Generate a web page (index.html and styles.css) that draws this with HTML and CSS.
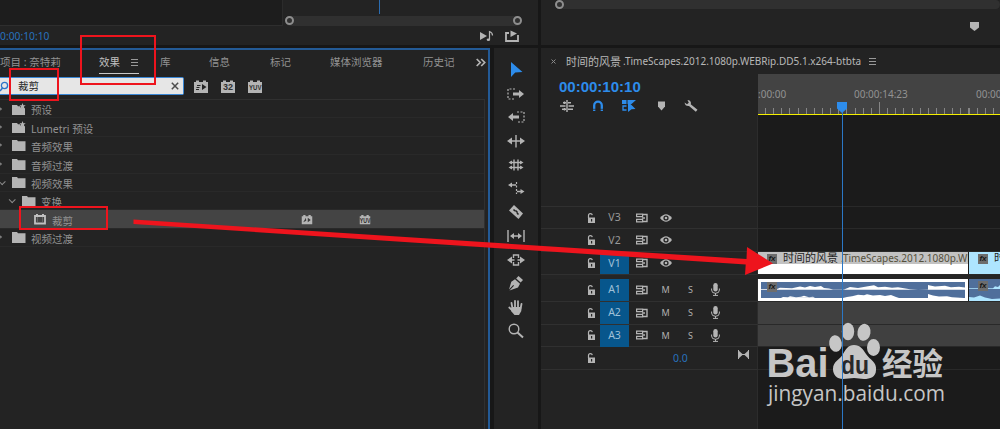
FILE: index.html
```html
<!DOCTYPE html>
<html lang="zh-CN">
<head>
  <meta charset="UTF-8">
  <title>时间的风景</title>
  <meta name="viewport" content="width=device-width, initial-scale=1.0">
  <link rel="stylesheet" href="styles.css">
</head>
<body>
  <!-- 图标定义 -->
  <svg class="defs" width="0" height="0">
    <symbol id="folder" viewBox="0 0 14 12"><path d="M0 1h5l1 1.3h7.5V12H0z"/></symbol>
    <symbol id="preset" viewBox="0 0 14 12"><path d="M0 2h5l1 1.3h2l1 2 2-1 2 1.2V12H0z"/><path d="M10.5 0l.9 2.2 2.3.1-1.8 1.5.7 2.3-2.1-1.3-2 1.3.6-2.3L7.4 2.3l2.3-.1z"/></symbol>
    <symbol id="brick" viewBox="0 0 16 13"><path d="M1 2h2V.5h3V2h4V.5h3V2h2v11H1z"/></symbol>
    <symbol id="lock" viewBox="0 0 9 10"><path d="M1.500 5V2.500Q1.500.700 3.300.700t2 1.500" fill="none" stroke="#b4b4b4" stroke-width="1.200"/><path d="M1 4.500h7V10H1z"/><path d="M4 6h1.200v2.500H4z" fill="#232323"/></symbol>
    <symbol id="sync" viewBox="0 0 12 10"><path d="M.600 1.100h6v2.600h-6zM.600 6.300h6v2.600h-6z" fill="none" stroke="#b4b4b4" stroke-width="1.200"/><path d="M7 1.500h4v7H7M6 5h3" fill="none" stroke="#b4b4b4" stroke-width="1.400"/></symbol>
    <symbol id="eye" viewBox="0 0 12 8"><path d="M0 4Q6-3.5 12 4 6 11.500 0 4z"/><circle cx="6" cy="4" r="2.6" fill="#232323"/><circle cx="6" cy="4" r="1.3"/></symbol>
    <symbol id="mic" viewBox="0 0 9 13"><rect x="2.3" width="4.400" height="8.500" rx="2.200"/><path d="M.6 5.500v1.500q0 3.300 3.900 3.300t3.900-3.300V5.500M4.500 10v2.400M2 12.400h5" fill="none" stroke="#b4b4b4"/></symbol>
    <symbol id="marker" viewBox="0 0 9 9"><path d="M0 0h9v5.500L4.500 9 0 5.500z"/></symbol>
  </svg>

  <div class="app">
    <!-- 上方监视器 -->
    <div class="monitor source">
      <div class="source-top">
        <div class="source-view"></div>
        <div class="source-bar">
          <i class="source-head"></i>
          <div class="zoombar"><i class="knob"></i><i class="knob"></i></div>
        </div>
      </div>
      <div class="source-foot">
        <span class="small-time">0:00:10:10</span>
        <svg class="play-audio" width="14" height="12" viewBox="0 0 14 12"><path d="M0 2l7 4-7 4z"/><path d="M9.500 9.500V1.500q3 1 3 4" fill="none" stroke="#b4b4b4" stroke-width="1.200"/><ellipse cx="8.400" cy="9.700" rx="1.700" ry="1.300"/></svg>
        <svg width="14" height="12" viewBox="0 0 14 12"><path d="M4 3H1v8h12V5" fill="none" stroke="#b4b4b4" stroke-width="1.800"/><path d="M5.500.500L12 3.500 5.500 7z"/></svg>
      </div>
    </div>
    <div class="monitor program">
      <div class="zoombar"><i class="knob"></i></div>
      <svg class="program-marker" width="9" height="9"><use href="#marker"/></svg>
    </div>

    <!-- 效果面板 -->
    <div class="effects">
      <div class="tabs">
        <span>项目 : 奈特莉</span>
        <span class="active">效果<i class="menu"></i></span>
        <span>库</span>
        <span>信息</span>
        <span>标记</span>
        <span>媒体浏览器</span>
        <span class="cut">历史记</span>
        <svg class="more" width="10" height="9" viewBox="0 0 10 9"><path d="M.700 1l3.500 3.500L.700 8M5.200 1l3.500 3.500L5.200 8" fill="none" stroke="#b4b4b4" stroke-width="1.700"/></svg>
      </div>
      <div class="search-row">
        <div class="search">
          <svg width="9" height="11" viewBox="0 0 9 11"><circle cx="4.500" cy="4.500" r="3.100" fill="none" stroke="#2d75c8" stroke-width="1.300"/><path d="M2.500 7L0 10" stroke="#2d75c8" stroke-width="1.500"/></svg>
          <span>裁剪</span>
          <svg class="clear" width="8" height="8" viewBox="0 0 8 8"><path d="M.800.800l6.400 6.400M7.200.800L.800 7.200" stroke="#4c4c4c" stroke-width="1.500"/></svg>
        </div>
        <span class="badge"><svg width="16" height="13" viewBox="0 0 16 13"><use href="#brick"/><path d="M9 4l4.500 3L9 10zM4 5h3.500v1H4zM3.500 7h3v1h-3zM3 9h3v1H3z" fill="#242424"/></svg></span>
        <span class="badge"><svg width="16" height="13"><use href="#brick"/></svg><b>32</b></span>
        <span class="badge"><svg width="16" height="13"><use href="#brick"/></svg><b class="yuv">YUV</b></span>
      </div>
      <div class="tree">
        <div class="row"><i class="shut"></i><svg><use href="#preset"/></svg><span>预设</span></div>
        <div class="row"><i class="shut"></i><svg><use href="#preset"/></svg><span>Lumetri 预设</span></div>
        <div class="row"><i class="shut"></i><svg><use href="#folder"/></svg><span>音频效果</span></div>
        <div class="row"><i class="shut"></i><svg><use href="#folder"/></svg><span>音频过渡</span></div>
        <div class="row"><i class="open"></i><svg><use href="#folder"/></svg><span>视频效果</span></div>
        <div class="row level-1"><i class="open"></i><svg><use href="#folder"/></svg><span>变换</span></div>
        <div class="row level-2">
          <svg viewBox="0 0 14 12"><path d="M2 3h10v7.500H2zM3 1.800h2M9 1.800h2" fill="none" stroke="#c0c0c0" stroke-width="1.800"/><path d="M4.500 4v5.500M9.500 4v5.500" stroke="#777" stroke-width=".700"/></svg>
          <span>裁剪</span>
          <div class="row-badges">
            <span class="badge"><svg viewBox="0 0 16 13"><use href="#brick"/><path d="M9 4l4 3-4 3zM6.500 4L3 10l4-2z" fill="#3c3c3c"/></svg></span>
            <span class="badge"><svg viewBox="0 0 16 13"><use href="#brick"/></svg><b class="yuv">YUV</b></span>
          </div>
        </div>
        <div class="row"><i class="shut"></i><svg><use href="#folder"/></svg><span>视频过渡</span></div>
      </div>
    </div>

    <!-- 工具栏 -->
    <div class="tools">
      <svg viewBox="0 0 18 18"><path d="M4 1v15l4.200-4.500 7.300-.500z" fill="#2d8ceb"/></svg>
      <svg viewBox="0 0 18 18"><path d="M8 4H1v10h7" class="dash"/><path d="M6 7.500h6V5l5 4-5 4v-2.500H6z"/></svg>
      <svg viewBox="0 0 18 18"><path d="M10 4h7v10h-7" class="dash"/><path d="M12 7.500H6V5L1 9l5 4v-2.500h6z"/></svg>
      <svg viewBox="0 0 18 18"><path d="M9 3v12.500M4 9h10" class="line"/><path d="M0 9l5-3.500v7zM18 9l-5-3.500v7z"/></svg>
      <svg viewBox="0 0 18 18"><path d="M7 3.500v11M11 3.500v11M3 6.500h12M3 11.500h12" class="line"/><path d="M1.500 6.500L5 4.500v4zM16.500 6.500L13 4.500v4zM1.500 11.500L5 9.500v4zM16.500 11.500L13 9.500v4z"/></svg>
      <svg viewBox="0 0 18 18"><path d="M9.500 3v12" class="dash"/><path d="M4 6h5M10 12.500h5" class="line"/><path d="M1 6l4-2.500v5zM17.500 12.500l-4-2.500v5z"/></svg>
      <svg viewBox="0 0 18 18"><path d="M7 2L16 10.500 11.500 16 2 7.500z"/><path d="M6.500 6.500L8 8M10 10l1.500 1.500M8.500 7.500l2 2" stroke="#232323" stroke-width="1.600"/></svg>
      <svg viewBox="0 0 18 18"><path d="M1 3v12M17 3v12M5 9h8" class="line"/><path d="M3 9l4-3v6zM15 9l-4-3v6z"/></svg>
      <svg viewBox="0 0 18 18"><path d="M6.500 7V4h5v3M6.500 11v3h5v-3M4 9h3.500M10.500 9H14" class="line"/><path d="M0 9l5-3.500v7zM18 9l-5-3.500v7z"/></svg>
      <svg viewBox="0 0 18 18"><path d="M11.500 2l4.500 4-2.300 2.500-4.500-4z"/><path d="M8 5.300l5 4.500-2 3.700-8.500 3L7 11.800 6.200 11 2 15.500l2.300-7.700z"/></svg>
      <svg viewBox="0 0 18 18"><path d="M5.500 10.500L4.500 5M8 9.500V2.800M11 9.500V3.200M13.500 11l1-5M2.300 9.500L6 13" fill="none" stroke="#b4b4b4" stroke-width="1.800" stroke-linecap="round"/><path d="M4.700 9h9.600v4l-2.300 4H7.500L4 13z"/></svg>
      <svg viewBox="0 0 18 18"><circle cx="7" cy="7" r="4.800" class="line"/><path d="M10.500 10.500l5.500 5" stroke="#b4b4b4" stroke-width="2"/></svg>
    </div>

    <!-- 时间轴 -->
    <div class="timeline">
      <div class="seq-tab"><svg width="5" height="5" viewBox="0 0 5 5"><path d="M.500.500l4 4M4.500.500l-4 4" stroke="#8a8a8a"/></svg><span class="seq-cn">时间的风景</span><span class="seq-name">.TimeScapes.2012.1080p.WEBRip.DD5.1.x264-btbta</span><i class="menu"></i></div>
      <div class="seq-head">
        <div class="seq-left">
          <div class="timecode">00:00:10:10</div>
          <div class="seq-tools">
            <svg viewBox="0 0 14 12"><path d="M7 0v12M3 2.800h3M8 2.800h3M0 6h5.500M8.500 6H14M2 9.300h4M8 9.300h5M4.500 1.500v2.500M4.500 8v2.500" fill="none" stroke="#b4b4b4" stroke-width="1.400"/></svg>
            <svg viewBox="0 0 14 12"><path d="M3.200 11V5.500a3.800 3.800 0 0 1 7.600 0V11" fill="none" stroke="#2d8ceb" stroke-width="2.300"/><path d="M1.500 9.300h11" stroke="#232323" stroke-width=".700"/></svg>
            <svg viewBox="0 0 14 12"><path d="M0 0h4.500v4H0zM5.500 0H14L9.500 4h-4z" fill="#2d8ceb"/><path d="M4.500 6H1v4h3.500" fill="none" stroke="#2d8ceb" stroke-width="1.300"/><path d="M6 1.500l7.500 7.500-4 .200L6 12z" fill="#2d8ceb"/></svg>
            <svg viewBox="-5 -1.500 14 12"><path d="M0 0h7v5L3.500 9 0 5z"/></svg>
            <svg viewBox="0 0 14 12"><path d="M3.500 0Q6.500 0 7 3L6.700 4.300l6.800 5.500-1.700 2L5 6Q1 6.300.600 2.500L3 4.200 4.800 2.700z"/></svg>
          </div>
        </div>
        <div class="ruler">
          <div class="ruler-labels"><span>:00:00</span><span>00:00:14:23</span><span>00:00:29:23</span></div>
          <div class="ticks"><i class="major"></i></div>
        </div>
      </div>
      <div class="tracks">
        <div class="track spacer"><div class="head"></div><div class="lane"></div></div>
        <div class="track"><div class="head"><svg class="i-lock"><use href="#lock"/></svg><b>V3</b><svg class="i-sync"><use href="#sync"/></svg><svg class="i-eye"><use href="#eye"/></svg></div><div class="lane"></div></div>
        <div class="track"><div class="head"><svg class="i-lock"><use href="#lock"/></svg><b>V2</b><svg class="i-sync"><use href="#sync"/></svg><svg class="i-eye"><use href="#eye"/></svg></div><div class="lane"></div></div>
        <div class="track">
          <div class="head"><svg class="i-lock"><use href="#lock"/></svg><b class="on">V1</b><svg class="i-sync"><use href="#sync"/></svg><svg class="i-eye"><use href="#eye"/></svg></div>
          <div class="lane">
            <div class="clip video"><em>fx</em><span class="clip-cn">时间的风景</span><span class="clip-name">.TimeScapes.2012.1080p.WEBRip</span></div>
            <div class="clip video next"><em>fx</em><span class="clip-cn">时间的风景</span></div>
          </div>
        </div>
        <div class="divider"></div>
        <div class="track">
          <div class="head"><svg class="i-lock"><use href="#lock"/></svg><b class="on">A1</b><svg class="i-sync"><use href="#sync"/></svg><u>M</u><u>S</u><svg class="i-mic"><use href="#mic"/></svg></div>
          <div class="lane">
            <div class="clip audio"><em>fx</em>
              <svg width="204" height="16" viewBox="0 0 204 16"><path fill="#fff" d="M0 7H16l3-1.300 12 .500 8-1.700 5 1 5-1.500 5 1 6-1 3 2 5 .500 4 1H83l6-2.500 8 1 10-1.700 6-1 4 2 7-.500 7 1 6-.600 12 2 8 .500 10 .300V3l2 .500 5 1 10-.700 6 1.400 8-.400 8 1 5-.300V7.800H0zM20 16l2-1 5 .3 2-1 6 1 5-.500 3-1 5 1.500 4-.500 2 1zM82 16l4-1 5-.800 6-1.500 6 .500 3-1 6 1.300 7-.500 5 1 6-1 5 2 3 1zM167 16v-4l5 1.500 6 1 8-.300 5 1 12 .800z"/></svg>
            </div>
            <div class="clip audio next"><em>fx</em>
              <svg width="31" height="22" viewBox="0 0 31 22"><path fill="#aee5ff" d="M0 9.200h24l2-2 3 .800 2-2V10H0zM0 18l5 .500 6-2 5 2 7 1.500 8-.500V22H0z"/></svg>
            </div>
          </div>
        </div>
        <div class="track"><div class="head"><svg class="i-lock"><use href="#lock"/></svg><b class="on">A2</b><svg class="i-sync"><use href="#sync"/></svg><u>M</u><u>S</u><svg class="i-mic"><use href="#mic"/></svg></div><div class="lane grey"></div></div>
        <div class="track"><div class="head"><svg class="i-lock"><use href="#lock"/></svg><b class="on">A3</b><svg class="i-sync"><use href="#sync"/></svg><u>M</u><u>S</u><svg class="i-mic"><use href="#mic"/></svg></div><div class="lane grey"></div></div>
        <div class="track"><div class="head"><svg class="i-lock"><use href="#lock"/></svg><span class="level">0.0</span><svg class="i-master" viewBox="0 0 11 9"><path d="M0 0l5 4.500L0 9zM11 0L6 4.500 11 9z"/><path d="M3 4.500h5M.500 0v9M10.500 0v9" stroke="#b4b4b4"/></svg></div><div class="lane"></div></div>
        <div class="track rest"><div class="head"></div><div class="lane"></div></div>
      </div>
    </div>

    <!-- 水印 -->
    <svg class="watermark" width="190" height="90" viewBox="0 0 190 90">
      <g fill="#c6c6c6">
        <text class="wm-logo" x="0.500" y="57" textLength="62" lengthAdjust="spacingAndGlyphs">Bai</text>
        <ellipse cx="69.500" cy="23.500" rx="6.300" ry="8.300" transform="rotate(-8 69.500 23.500)"/>
        <ellipse cx="82" cy="11.500" rx="6.200" ry="8.700"/>
        <ellipse cx="98" cy="12.300" rx="6.500" ry="8.500" transform="rotate(10 98 12.300)"/>
        <ellipse cx="107.500" cy="27.500" rx="6.500" ry="8.500"/>
        <path d="M88 25c6 0 9 4 12 9 4 6 11 8 10 16 0 7-6 9-12 9-4 0-6-1-10-1s-7 1-11 1c-6 0-10-4-10-10 0-8 7-9 10-15 3-5 5-9 11-9z"/>
        <text class="wm-cn" x="116" y="55" textLength="61" lengthAdjust="spacingAndGlyphs">经验</text>
        <text class="wm-url" x="2" y="81" textLength="177" lengthAdjust="spacingAndGlyphs">jingyan.baidu.com</text>
      </g>
      <text class="wm-du" x="75" y="54" textLength="28" lengthAdjust="spacingAndGlyphs">du</text>
    </svg>

    <!-- 播放指示器 -->
    <div class="playhead"><svg width="10" height="11" viewBox="0 0 10 11"><path d="M0 0h10v6.500L5 11 0 6.500z" fill="#2d8ceb"/></svg></div>

    <!-- 红色标注 -->
    <div class="mark mark-tab"></div>
    <div class="mark mark-search"></div>
    <div class="mark mark-crop"></div>
    <svg class="arrow" width="1000" height="429"><path d="M133.500 219.500L746.500 259l.500-12L773 263.500 745 275l.700-10.500L133.500 224z" fill="#ee141d"/></svg>
  </div>
</body>
</html>
```
FILE: styles.css
```css
:root {
  --panel: #232323;
  --gutter: #171717;
  --line: #303030;
  --icon: #b4b4b4;
  --text: #929292;
  --blue: #2d8ceb;
  --red: #ee141d;
}

* {
  box-sizing: border-box;
}

body {
  margin: 0;
  background: var(--gutter);
  color: var(--text);
  font-family: "Noto Sans", "Noto Sans CJK SC", sans-serif;
  font-size: 10.5px;
  line-height: 1;
}

svg {
  display: block;
  flex: none;
  fill: var(--icon);
}

.defs {
  position: absolute;
}

.app {
  position: relative;
  width: 1000px;
  height: 429px;
  overflow: hidden;
  display: grid;
  grid-template-columns: 490px 44px 459px;
  grid-template-rows: 45px 381px;
  gap: 3px;
  column-gap: 3.5px;
}

/* 监视器 */
.monitor {
  background: var(--panel);
}

.source {
  grid-column: 1 / 3;
}

.source-top {
  display: flex;
  height: 26px;
}

.source-view {
  width: 283px;
  background: #1d1d1d;
  border-right: 1px solid #2b2b2b;
  border-bottom: 1px solid #2e2e2e;
}

.source-bar {
  width: 237px;
  margin-left: 2px;
  display: flex;
  flex-direction: column;
}

.source-head {
  width: 1px;
  height: 14px;
  margin: 0 0 2px 94px;
  background: #2b6cb0;
}

.zoombar {
  display: flex;
  justify-content: space-between;
  height: 10px;
  background: #303030;
  border-radius: 5px;
}

.knob {
  width: 9px;
  height: 9px;
  border: 2px solid #8e8e8e;
  border-radius: 50%;
}

.source-foot {
  display: flex;
  align-items: center;
  gap: 11px;
  height: 19px;
}

.small-time {
  width: 469px;
  padding-top: 2px;
  font-size: 10.3px;
  color: #2872bd;
}

.program .zoombar {
  margin-left: 14px;
  height: 9px;
}

.program-marker {
  margin: 13px 0 0 429px;
}

/* 效果面板 */
.effects {
  background: var(--panel);
  border-top: 2px solid #235a96;
  border-right: 2px solid #235a96;
  overflow: hidden;
}

.tabs {
  display: grid;
  grid-template-columns: 99px 61px 49px 61px 60px 93px 53px 12px;
  align-items: center;
  height: 25px;
  white-space: nowrap;
}

.tabs .active {
  display: flex;
  align-items: center;
  gap: 11px;
  width: 40px;
  height: 22px;
  border-bottom: 1px solid #c8c8c8;
  color: #c0c0c0;
}

.menu {
  flex: none;
  width: 7px;
  height: 7px;
  border: solid #999;
  border-width: 1px 0;
  background: linear-gradient(#999, #999) 0 2px / 7px 1px no-repeat;
}

.cut {
  width: 31px;
  border-right: 1px solid #383838;
}

.search-row {
  display: flex;
  align-items: center;
  gap: 11px;
  height: 22px;
}

.search {
  display: flex;
  align-items: center;
  width: 184px;
  height: 18px;
  padding-right: 4px;
  background: #e6e6e6;
  border: 1px solid #3a87d5;
  border-left: 0;
  border-radius: 0 2px 2px 0;
  color: #252525;
}

.search span {
  margin-left: 9px;
}

.clear {
  margin-left: auto;
}

.badge {
  display: grid;
  place-items: center;
  width: 16px;
}

.search-row .badge:nth-child(2) {
  margin-left: -2px;
}

.badge > * {
  grid-area: 1 / 1;
}

.badge b {
  padding-top: 2px;
  color: #303030;
  font: bold 9px "Liberation Sans", sans-serif;
}

.badge .yuv {
  font-size: 8px;
  transform: scaleX(.75);
}

.tree {
  width: 485px;
  height: 340px;
  margin-top: 2px;
  border: 1px solid #303030;
  border-left: 0;
}

.row {
  display: flex;
  align-items: center;
  height: 18.4px;
  border-bottom: 1px solid #292929;
  white-space: nowrap;
}

.row svg {
  width: 14px;
  height: 12px;
}

.row span {
  margin-left: 5px;
  padding-top: 4px;
}

.shut, .open {
  width: 4px;
  height: 4px;
  margin-right: 10px;
  margin-left: -3px;
  border: solid #8a8a8a;
  border-width: 1px 1px 0 0;
  transform: rotate(45deg);
}

.shut {
  margin-right: 11px;
}

.open {
  width: 5px;
  height: 5px;
  margin-right: 8px;
  margin-left: -1px;
  transform: rotate(135deg) translate(-1px, 0);
}

.level-1 .open {
  margin-left: 9px;
}

.level-2 {
  padding-left: 33px;
  background: #444;
}

.row-badges {
  display: flex;
  gap: 45px;
  margin-left: 228px;
}

.row-badges .badge {
  width: 12px;
  margin: 0;
  padding: 0;
}

.row-badges svg {
  width: 12px;
  height: 11px;
  margin: 0;
}

.row-badges .yuv {
  font-size: 7px;
}

/* 工具栏 */
.tools {
  display: flex;
  flex-direction: column;
  align-items: center;
  gap: 5.7px;
  padding-top: 13px;
  background: var(--panel);
}

.tools svg {
  width: 18px;
  height: 18px;
}

.line {
  fill: none;
  stroke: var(--icon);
  stroke-width: 1.4;
}

.dash {
  fill: none;
  stroke: var(--icon);
  stroke-width: 1.2;
  stroke-dasharray: 2 1.5;
}

/* 时间轴 */
.timeline {
  background: var(--panel);
  overflow: hidden;
}

.seq-tab {
  display: flex;
  align-items: center;
  height: 26px;
  padding-left: 10px;
  color: #b8b8b8;
  white-space: nowrap;
}

.seq-cn {
  margin-left: 10px;
  font-size: 11px;
}

.seq-name {
  flex: none;
  width: 237px;
  margin-left: 2px;
  font-size: 10px;
}

.seq-tab .menu {
  margin-left: 9px;
}

.seq-head {
  display: flex;
  height: 41px;
}

.seq-left {
  width: 217px;
  padding: 4px 0 0 18px;
}

.timecode {
  color: var(--blue);
  font: bold 15px/17px "Liberation Sans", sans-serif;
}

.seq-tools {
  display: flex;
  gap: 17px;
  margin-top: 5px;
  margin-left: 1px;
}

.seq-tools svg {
  width: 14px;
  height: 12px;
}

.ruler {
  flex: 1;
  display: flex;
  flex-direction: column;
  justify-content: space-between;
  overflow: hidden;
  background: #434343;
  border-bottom: 1.5px solid #f4ef00;
}

.ruler-labels {
  display: grid;
  grid-template-columns: 96px 122px 60px;
  padding-top: 15px;
  font-size: 10px;
}

.ticks {
  height: 12px;
  padding-left: 121px;
  background: repeating-linear-gradient(90deg, transparent 0 7px, #858585 7px 8px, transparent 8px 8.14px) 0 6px / 100% 6px no-repeat;
}

.major {
  display: block;
  width: 1px;
  height: 12px;
  background: #858585;
}

.track {
  display: flex;
  height: 22.9px;
}

.spacer {
  height: 91.6px;
}

.rest {
  height: 60px;
}

.head {
  display: flex;
  align-items: center;
  width: 217px;
  padding-left: 46px;
  border-bottom: 1px solid var(--line);
  border-right: 1px solid #2c2c2c;
}

.lane {
  flex: 1;
  display: flex;
  gap: 1px;
  overflow: hidden;
  background: #1b1b1b;
  border-bottom: 1px solid #292929;
}

.grey {
  background: #404040;
}

.divider {
  height: 3.5px;
  background: #252525;
}

.head b {
  display: grid;
  place-items: center;
  width: 29px;
  height: 22px;
  margin: 0 7px 0 4px;
  color: #999;
  font-weight: 400;
  font-size: 10.5px;
}

.head .on {
  background: #07568c;
  color: #9fc0d8;
}

.i-lock {
  width: 9px;
  height: 10px;
}

.i-sync {
  width: 12px;
  height: 10px;
}

.i-eye {
  width: 12px;
  height: 8px;
  margin-left: 12px;
}

.i-mic {
  width: 9px;
  height: 13px;
  margin-left: 8px;
}

.head u {
  width: 25px;
  color: #b0b0b0;
  font-size: 9px;
  text-align: center;
  text-decoration: none;
}

.head .i-sync + u {
  margin-left: 5px;
}

.level {
  width: 65px;
  margin-left: 77px;
  color: #2872bd;
}

.i-master {
  width: 11px;
  height: 9px;
  margin-bottom: 7px;
}

/* 素材 */
.clip {
  display: flex;
  flex: none;
  width: 210px;
  height: 22px;
  overflow: hidden;
  color: #222;
  white-space: nowrap;
}

.clip em {
  flex: none;
  width: 10px;
  height: 10px;
  margin: 2px 5px 0 9px;
  background: #6d6d6d;
  color: #161616;
  font: italic bold 8px/9px "Liberation Sans", sans-serif;
  text-align: center;
}

.video {
  background: linear-gradient(#c2c2c2 12px, #fff 12px);
}

.video.next {
  background: #aee5ff;
}

.clip-cn {
  margin-left: 1px;
  font-size: 11px;
}

.clip-name {
  margin: 1px 0 0 3px;
  color: #55503c;
  font-size: 10px;
}

.audio {
  background: #506f9b;
  border: 3px solid #fff;
}

.audio em {
  margin: 0 -16px 0 6px;
  z-index: 1;
}

.audio.next {
  border: 0;
}

.audio.next em {
  margin: 2px -19px 0 9px;
}

/* 覆盖层 */
.playhead {
  position: absolute;
  left: 837px;
  top: 102px;
  width: 10px;
  height: 327px;
  background: linear-gradient(#2b77c5, #2b77c5) 5px 0 / 1px 100% no-repeat;
}

.watermark {
  position: absolute;
  left: 766px;
  top: 320px;
}

.wm-logo {
  font: bold 40px "Liberation Sans", sans-serif;
}

.wm-du {
  fill: #292929;
  font: bold 26px "Liberation Sans", sans-serif;
}

.wm-cn {
  font: bold 31px "Noto Sans CJK SC", sans-serif;
}

.wm-url {
  font: 21px "Open Sans", sans-serif;
}

.mark {
  position: absolute;
  border: 2px solid var(--red);
}

.mark-tab {
  left: 80px;
  top: 35px;
  width: 76px;
  height: 50px;
}

.mark-search {
  left: 9px;
  top: 68px;
  width: 50px;
  height: 33px;
}

.mark-crop {
  left: 19px;
  top: 206px;
  width: 89px;
  height: 24px;
}

.arrow {
  position: absolute;
  left: 0;
  top: 0;
}
```
